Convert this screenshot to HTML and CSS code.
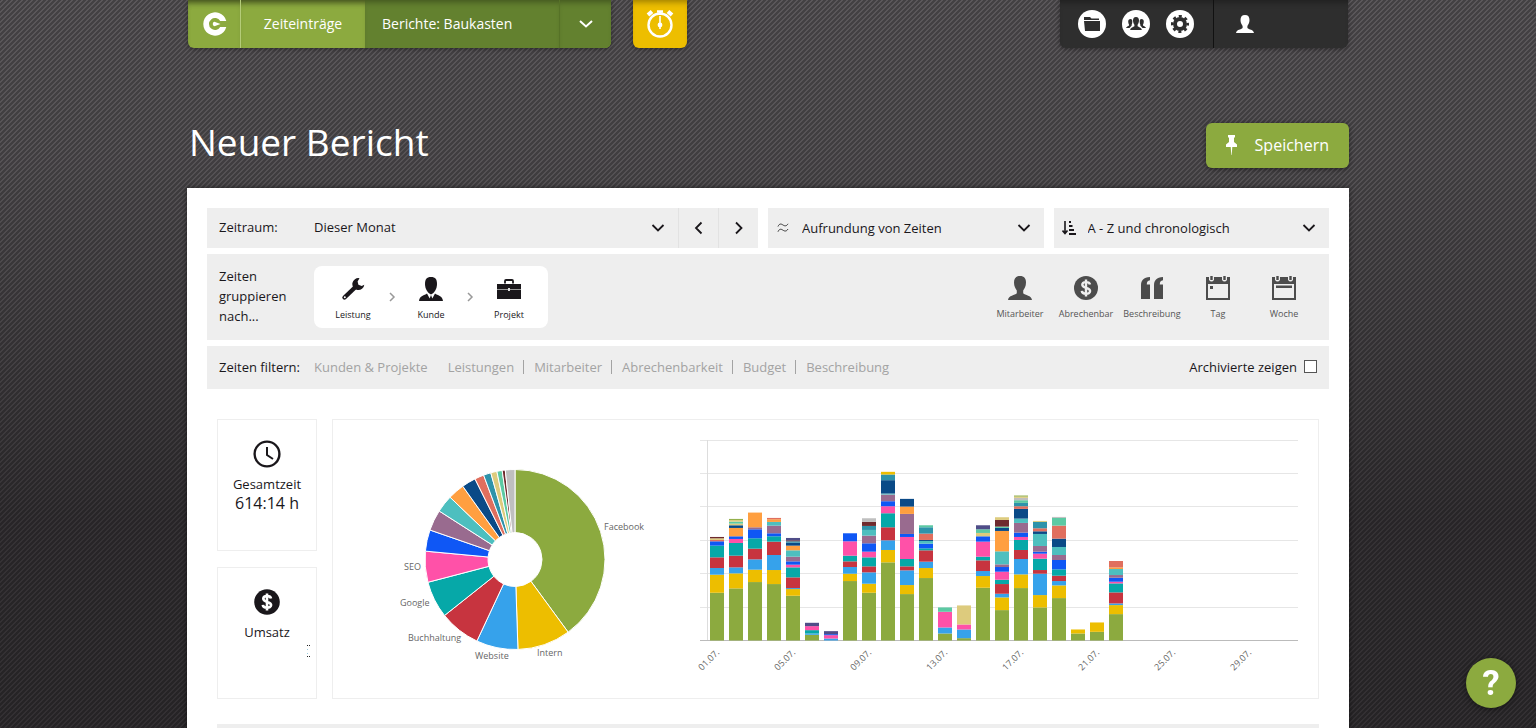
FILE: index.html
```html
<!DOCTYPE html>
<html lang="de">
<head>
    <meta charset="UTF-8">
    <meta name="viewport" content="width=device-width, initial-scale=1.0">
    <title>Neuer Bericht</title>
    <link rel="stylesheet" href="styles.css">
</head>
<body>
    <div class="wrapper">
        <header class="topbar">
            <nav class="main-nav">
                <a href="#" class="logo" aria-label="Start">
                    <svg width="24" height="24" viewBox="0 0 24 24" fill="#fff"><path d="M23.300 9A11.700 11.700 0 1 0 23.300 15H17.200A6 6 0 1 1 17.200 9Z"/><path d="M9.800 12c0-1.500 1-2.300 2.300-2.100L17.500 12l-5.400 2.100C10.800 14.300 9.800 13.500 9.800 12Z"/></svg>
                </a>
                <a href="#" class="nav-link">Zeiteinträge</a>
                <a href="#" class="nav-link active">Berichte: Baukasten</a>
                <button class="nav-more" aria-label="Mehr Berichte">
                    <svg width="14" height="10" viewBox="0 0 14 10"><path d="M1 2l6 5.500L13 2" fill="none" stroke="#fff" stroke-width="2"/></svg>
                </button>
            </nav>
            <button class="timer" aria-label="Stoppuhr">
                <svg width="28" height="28" viewBox="0 0 28 28" fill="none" stroke="#fff"><circle cx="14" cy="15" r="11.500" stroke-width="2.400"/><path d="M2 5l4-3.500M22 1.500l4 3.500" stroke-width="4"/><path d="M11 1.500h6M14 2v3" stroke-width="2.400"/><path d="M14 6v8" stroke-width="1.600"/><circle cx="14" cy="15" r="2.400" fill="#fff" stroke="none"/><path d="M14 15v4" stroke-width="1.600"/></svg>
            </button>
            <nav class="user-nav">
                <div class="admin-links">
                    <a href="#" class="round" aria-label="Projekte">
                        <svg width="16" height="14" viewBox="0 0 16 14" fill="#2e2e2e"><path d="M0 0h6l1.500 1.500H15V3H0zM0 4h16v10H1z"/></svg>
                    </a>
                    <a href="#" class="round" aria-label="Team">
                        <svg width="20" height="14" viewBox="0 0 20 14" fill="#2e2e2e"><path d="M10 0c2.200 0 3 1.600 3 3.600 0 2-.8 3.200-1.400 4.200v1.500c1 .9 4 1.200 4.200 3.700H4.200c.2-2.500 3.200-2.800 4.200-3.700V7.800C7.800 6.800 7 5.600 7 3.600 7 1.600 7.800 0 10 0Z"/><path d="M4.500 2C6 2 6.300 3 6.300 4.500S6 7 5.700 7.600v1L3.500 11H0c.2-1.600 2.300-1.800 3-2.600v-.9c-.5-.6-.8-1.600-.8-3S3 2 4.500 2ZM15.500 2c-1.500 0-1.800 1-1.800 2.500s.3 2.500.6 3.100v1l2.200 2.400H20c-.2-1.600-2.300-1.800-3-2.600v-.9c.5-.6.8-1.600.8-3S17 2 15.500 2Z"/></svg>
                    </a>
                    <a href="#" class="round" aria-label="Einstellungen">
                        <svg width="18" height="18" viewBox="0 0 18 18"><circle cx="9" cy="9" r="5" fill="none" stroke="#2e2e2e" stroke-width="4"/><circle cx="9" cy="9" r="7.800" fill="none" stroke="#2e2e2e" stroke-width="2.400" stroke-dasharray="3.100 3.026" stroke-dashoffset="1.500"/></svg>
                    </a>
                </div>
                <a href="#" class="profile" aria-label="Profil">
                    <svg width="18" height="18" viewBox="0 0 24 24" fill="#fff"><use href="#person"/></svg>
                </a>
            </nav>
        </header>

        <div class="headline">
            <h1>Neuer Bericht</h1>
            <button class="save">
                <svg width="11" height="20" viewBox="0 0 11 20" fill="#fff"><path d="M2 0h7v2L8 3v4l3 2.500V12H6.300L5.700 20h-.4L4.700 12H0V9.500L3 7V3L2 2z"/></svg>
                Speichern
            </button>
        </div>

        <main class="report">
            <div class="controls">
                <div class="field period">
                    <label for="period">Zeitraum:</label>
                    <div class="select-box">
                        <select id="period"><option>Dieser Monat</option></select>
                        <svg class="chevron" width="14" height="10" viewBox="0 0 14 10"><path d="M1.500 2L7 7.500 12.500 2"/></svg>
                    </div>
                    <button class="step" aria-label="Zurück"><svg width="10" height="14" viewBox="0 0 10 14"><path d="M7.500 1.500L2 7l5.500 5.500"/></svg></button>
                    <button class="step" aria-label="Weiter"><svg width="10" height="14" viewBox="0 0 10 14"><path d="M2 1.500L7.500 7 2 12.500"/></svg></button>
                </div>
                <div class="field option">
                    <svg class="lead" width="12" height="10" viewBox="0 0 12 10" fill="none" stroke="#333"><path d="M1 3.500C2.500 0 4.500 1 6 2s3.500 1.500 5-1.200M1 8.700c1.500-3.500 3.500-2.500 5-1.500s3.500 1.500 5-1.200"/></svg>
                    <div class="select-box">
                        <select id="rounding" aria-label="Aufrundung"><option>Aufrundung von Zeiten</option></select>
                        <svg class="chevron" width="14" height="10" viewBox="0 0 14 10"><path d="M1.500 2L7 7.500 12.500 2"/></svg>
                    </div>
                </div>
                <div class="field option">
                    <svg class="lead" width="14" height="14" viewBox="0 0 14 14" fill="none" stroke="#1a171b"><path d="M3 0v12M.5 9.500L3 12.500l2.500-3" stroke-width="1.600"/><path d="M7 1h2M7 5h3.500M7 9h5M7 13h7" stroke-width="2"/></svg>
                    <div class="select-box">
                        <select id="sorting" aria-label="Sortierung"><option>A - Z und chronologisch</option></select>
                        <svg class="chevron" width="14" height="10" viewBox="0 0 14 10"><path d="M1.500 2L7 7.500 12.500 2"/></svg>
                    </div>
                </div>
            </div>

            <div class="grouping">
                <div class="row-label">Zeiten gruppieren nach...</div>
                <div class="chosen">
                    <button class="group">
                        <svg width="24" height="24" viewBox="0 0 24 24"><path d="M3.500 20.500L15 9.500" fill="none" stroke="#1a171b" stroke-width="4.400" stroke-linecap="round"/><path d="M18.500 1.200a6 6 0 1 0 4.800 6.500l-2.600 1.300-3.300-1.300-.8-3.200z" fill="#1a171b"/><circle cx="3.800" cy="20.200" r="1" fill="#fff"/></svg>
                        Leistung
                    </button>
                    <svg class="sep" width="7" height="10" viewBox="0 0 7 10"><path d="M1 1l4 4-4 4"/></svg>
                    <button class="group">
                        <svg width="24" height="24" viewBox="0 0 24 24" fill="#1a171b"><path d="M12 0c4.500 0 6 2.600 6 7 0 5-2.600 9-6 10.500C8.600 16 6 12 6 7c0-4.400 1.500-7 6-7Z"/><path d="M8 16.500c-2.500 2-7.500 2.200-8 7.500h24c-.5-5.300-5.500-5.500-8-7.500l-2.700 5L12 18l-1.300 3.500z"/></svg>
                        Kunde
                    </button>
                    <svg class="sep" width="7" height="10" viewBox="0 0 7 10"><path d="M1 1l4 4-4 4"/></svg>
                    <button class="group">
                        <svg width="24" height="24" viewBox="0 0 24 24"><path d="M8 6.500V4q0-1 1-1h6q1 0 1 1v2.500" fill="none" stroke="#1a171b" stroke-width="1.800"/><path d="M0 7h24v15H0z" fill="#1a171b"/><path d="M0 12.500h24" stroke="#999"/><path d="M11 11h2v3h-2z" fill="#ddd"/></svg>
                        Projekt
                    </button>
                </div>
                <div class="available">
                    <button class="group">
                        <svg width="24" height="24" viewBox="0 0 24 24" fill="#4c4c4c"><path id="person" d="M12 0c4.200 0 6 2.600 6 6.500 0 4-1.600 6-2.800 8v2.700C17 19.500 23.500 19 24 24H0c.5-5 7-4.500 8.800-6.800v-2.700C7.600 12.500 6 10.500 6 6.500 6 2.600 7.800 0 12 0Z"/></svg>
                        Mitarbeiter
                    </button>
                    <button class="group">
                        <svg width="24" height="24" viewBox="0 0 24 24"><circle cx="12" cy="12" r="12" fill="#4c4c4c"/><path d="M16 8.500C15.500 5.400 8.300 5.200 8.300 8.800c0 3.800 7.800 2.400 7.800 6.300 0 3.800-8 3.500-8.300-.3M12 3.500v17" fill="none" stroke="#eee" stroke-width="2.400"/></svg>
                        Abrechenbar
                    </button>
                    <button class="group">
                        <svg width="24" height="24" viewBox="0 0 24 24" fill="#4c4c4c"><path d="M10 1v3.200C7.600 4.500 6.800 5.700 6.800 8.500H10V23H1V9.500C1 4.500 3.500 1.300 10 1ZM23 1v3.200c-2.400.3-3.200 1.500-3.200 4.300H23V23h-9V9.500C14 4.500 16.500 1.300 23 1Z"/></svg>
                        Beschreibung
                    </button>
                    <button class="group">
                        <svg width="24" height="24" viewBox="0 0 24 24"><path id="calendar" fill-rule="evenodd" d="M0 1h3v3q2.500 3 5 0V1h8v3q2.500 3 5 0V1h3v23H0zM2 8v14h20V8z" fill="#4c4c4c"/><path d="M5.500 0v4M18.500 0v4" stroke="#4c4c4c" stroke-width="2.400"/><path d="M4 10h3v3H4z" fill="#4c4c4c"/></svg>
                        Tag
                    </button>
                    <button class="group">
                        <svg width="24" height="24" viewBox="0 0 24 24"><use href="#calendar"/><path d="M5.500 0v4M18.500 0v4" stroke="#4c4c4c" stroke-width="2.400"/><path d="M4 9.500h16v2.500H4z" fill="#4c4c4c"/></svg>
                        Woche
                    </button>
                </div>
            </div>

            <div class="filters">
                <div class="row-label">Zeiten filtern:</div>
                <a href="#" class="first">Kunden &amp; Projekte</a>
                <a href="#">Leistungen</a>
                <a href="#">Mitarbeiter</a>
                <a href="#">Abrechenbarkeit</a>
                <a href="#">Budget</a>
                <a href="#">Beschreibung</a>
                <label class="archived" for="archived">Archivierte zeigen <input type="checkbox" id="archived"></label>
            </div>

            <div class="results">
                <div class="totals">
                    <div class="card">
                        <svg width="28" height="28" viewBox="0 0 28 28" fill="none" stroke="#1a171b"><circle cx="14" cy="14" r="12.400" stroke-width="2.400"/><path d="M14 7v8l6 4" stroke-width="2"/></svg>
                        <span>Gesamtzeit</span>
                        <strong>614:14 h</strong>
                    </div>
                    <div class="card">
                        <svg width="28" height="28" viewBox="0 0 28 28"><circle cx="14" cy="14" r="12.800" fill="#1a171b"/><path d="M18 10.500C17.500 7.400 10.300 7.200 10.300 10.800c0 3.800 7.800 2.400 7.800 6.300 0 3.800-8 3.500-8.300-.3M14 5.500v17" fill="none" stroke="#fff" stroke-width="2.600"/></svg>
                        <span>Umsatz</span>
                        <svg class="amount" width="3" height="12" viewBox="0 0 3 12"><path d="M0 0h1v1H0zM2 0h1v1H2zM0 11h1v1H0zM2 11h1v1H2z" fill="#222"/><path d="M0 4h1v1H0zM0 8h1v1H0z" fill="#9cd"/></svg>
                    </div>
                </div>
                <div class="charts">
                    <svg id="pie" width="330" height="238" viewBox="0 0 330 238"></svg>
                    <svg id="columns" width="600" height="238" viewBox="0 0 600 238"></svg>
                </div>
            </div>

            <div class="table-head"></div>
        </main>
    </div>
    <button class="help" aria-label="Hilfe">?</button>
    <script src="script.js"></script>
</body>
</html>
```
FILE: styles.css
```css
* {
    box-sizing: border-box;
}
body {
    margin: 0;
    min-height: 100vh;
    font-family: 'Open Sans', sans-serif;
    font-size: 13px;
    line-height: 20px;
    color: #1a171b;
    background-color: #302e30;
    background-image:
        linear-gradient(135deg, rgba(0,0,0,.25) 0 12%, transparent 12% 38%, rgba(0,0,0,.25) 38% 62%, transparent 62% 88%, rgba(0,0,0,.25) 88%),
        linear-gradient(#5a575a, #565356 150px, #353235 520px, #322f32);
    background-size: 5px 5px, 100% 100%;
}
a {
    color: inherit;
    text-decoration: none;
}
button, select {
    font: inherit;
    color: inherit;
    border: 0;
    background: none;
    cursor: pointer;
}
button {
    padding: 0;
}
svg {
    display: block;
    flex: none;
}
.wrapper {
    max-width: 1162px;
    margin: 0 auto;
}

/* Kopfleiste */
.topbar {
    display: flex;
    height: 48px;
    padding: 0 1px;
    font-size: 14px;
    color: #fff;
}
.main-nav, .timer, .user-nav {
    display: flex;
    overflow: hidden;
    border-radius: 0 0 6px 6px;
    box-shadow: 0 1px 4px rgba(0,0,0,.4), inset 0 6px 6px -4px rgba(0,0,0,.35);
}
.main-nav {
    background-color: #8caa3f;
}
.main-nav a, .nav-more {
    display: flex;
    align-items: center;
    justify-content: center;
    box-shadow: inset 0 6px 6px -4px rgba(0,0,0,.35);
}
.main-nav .logo {
    width: 53px;
    padding-left: 2px;
    border-right: 1px solid #b4cc78;
}
.nav-link {
    width: 124px;
}
.main-nav .active {
    width: 194px;
    padding-left: 17px;
    justify-content: flex-start;
    background: #63812f;
}
.nav-more {
    width: 52px;
    background: #63812f;
    border-left: 1px solid #567227;
}
.timer {
    width: 54px;
    margin-left: 22px;
    align-items: center;
    justify-content: center;
    background: #edbe00;
}
.user-nav {
    width: 288px;
    margin-left: auto;
    background: #2e2e2e;
}
.admin-links {
    display: flex;
    align-items: center;
    gap: 16px;
    width: 154px;
    padding-left: 18px;
    border-right: 1px solid #111;
}
.round {
    display: flex;
    align-items: center;
    justify-content: center;
    width: 28px;
    height: 28px;
    border-radius: 50%;
    background: #fff;
}
.profile {
    display: flex;
    align-items: center;
    padding-left: 22px;
}

.headline {
    display: flex;
    align-items: flex-start;
    justify-content: space-between;
    padding: 75px 0 20px 2px;
}
h1 {
    margin: 0;
    font-size: 37px;
    line-height: 38px;
    font-weight: 400;
    color: #fff;
}
.save {
    display: flex;
    align-items: center;
    justify-content: space-between;
    width: 143px;
    height: 45px;
    padding: 0 20px 2px;
    font-size: 16px;
    color: #fff;
    background: #8caa3f;
    border-radius: 6px;
    box-shadow: 0 1px 5px rgba(0,0,0,.5);
}

.report {
    padding: 20px 20px 0;
    background: #fff;
    box-shadow: 0 0 5px rgba(0,0,0,.5);
}
.controls {
    display: grid;
    grid-template-columns: 2fr 1fr 1fr;
    gap: 10px;
    margin-bottom: 6px;
}
.field {
    display: flex;
    align-items: center;
    height: 40px;
    background: #eee;
}
.period label {
    width: 107px;
    padding: 0 0 2px 12px;
}
.option .lead {
    margin-left: 8px;
    width: 14px;
}
.option .select-box {
    margin-left: 12px;
}
.select-box {
    display: grid;
    flex: 1;
    align-items: center;
}
.select-box select, .chevron {
    grid-area: 1 / 1;
}
.select-box select {
    width: 100%;
    height: 40px;
    padding: 0;
    appearance: none;
}
.select-box #period {
    padding-bottom: 2px;
}
.chevron {
    justify-self: end;
    margin-right: 13px;
    pointer-events: none;
}
.chevron path, .step path {
    fill: none;
    stroke: #1a171b;
    stroke-width: 1.8;
}
.step {
    display: flex;
    align-items: center;
    justify-content: center;
    width: 40px;
    height: 40px;
    border-left: 1px solid #e2e2e2;
}

.grouping {
    display: flex;
    padding: 12px;
    margin-bottom: 6px;
    background: #eee;
}
.row-label {
    width: 95px;
    flex: none;
}
.grouping .row-label {
    padding-right: 20px;
}
.chosen {
    display: flex;
    align-items: center;
    justify-content: center;
    gap: 3px;
    width: 234px;
    height: 62px;
    background: #fff;
    border-radius: 8px;
}
.group {
    display: flex;
    flex-direction: column;
    align-items: center;
    justify-content: center;
    gap: 8px;
    width: 66px;
    padding-top: 2px;
    font-size: 9px;
    line-height: 12px;
}
.chosen .group {
    width: 65px;
    height: 62px;
    padding-top: 4px;
}
.sep path {
    fill: none;
    stroke: #999;
    stroke-width: 1.5;
}
.available {
    display: flex;
    height: 62px;
    margin-left: auto;
    color: #555;
}

.filters {
    display: flex;
    align-items: center;
    height: 43px;
    padding: 0 12px 2px;
    background: #eee;
}
.filters a {
    height: 14px;
    line-height: 14px;
    padding: 0 9px 0 10px;
    color: #a3a3a3;
    border-left: 1px solid #a3a3a3;
}
.filters .first {
    padding-left: 0;
    border-left: 0;
}
.filters .first + a {
    border-left-color: transparent;
}
.archived {
    display: flex;
    align-items: center;
    gap: 7px;
    margin-left: auto;
}
.archived input {
    width: 13px;
    height: 13px;
    margin: 0;
    appearance: none;
    background: #fff;
    border: 1px solid #555;
}
.archived input:checked {
    background: #8caa3f;
}

.results {
    display: flex;
    gap: 15px;
    padding: 30px 10px 25px;
}
.totals {
    display: flex;
    flex-direction: column;
    gap: 16px;
    width: 100px;
}
.card {
    display: flex;
    flex-direction: column;
    align-items: center;
    height: 132px;
    padding: 20px 6px;
    border: 1px solid #eee;
}
.card span {
    margin-top: 6px;
}
.card strong {
    font-size: 16px;
    line-height: 18px;
    font-weight: 400;
}
.card .amount {
    align-self: flex-end;
    margin-top: 3px;
}
.charts {
    display: flex;
    flex: 1;
    justify-content: space-between;
    padding: 20px;
    border: 1px solid #eee;
}
.charts svg {
    overflow: visible;
}
.charts text {
    font-size: 9px;
    fill: #666;
}
.table-head {
    height: 40px;
    margin: 0 10px;
    background: #eee;
}
.help {
    position: fixed;
    right: 20px;
    bottom: 20px;
    width: 50px;
    height: 50px;
    padding-top: 2px;
    font-family: Roboto, sans-serif;
    font-size: 35px;
    font-weight: 700;
    color: #fff;
    background: #8caa3f;
    border-radius: 50%;
    box-shadow: 0 1px 6px rgba(0,0,0,.5);
}
```
FILE: script.js
```js
var NS = 'http://www.w3.org/2000/svg';
var colors = ['#8caa3f', '#edbe00', '#36a2eb', '#c7343f', '#06a8a8', '#ff51a8', '#0f57f5', '#996b8f', '#4dbfbf',
    '#ff9f40', '#0a4a87', '#e06f5e', '#2e93aa', '#ddcb7d', '#5cc9a3', '#6e2a2e', '#bfbfbf', '#4f4d88', '#edbe00', '#ddcb7d', '#8caa3f'];

// Stunden pro Leistung
var shares = [245.3, 58.5, 45.9, 45.2, 40.6, 34.1, 23.5, 23, 19.1, 18.3, 15.5, 10.2, 8.2, 6.8, 5.8, 3.4, 10.6];

// Stunden pro Tag, gestapelt nach Leistung
var days = [
    [14.3, 5.4, 2, 3.2, 3.5, 0, 1.3, 0, 0, 0, 0, 0.4, 0, 0.5, 0, 0.4],
    [15.6, 4.5, 1.8, 3.5, 3.8, 1.2, 0.8, 0, 0, 2.5, 0.8, 0, 0, 0.5, 0.6, 0, 0, 0, 0, 0.5, 0.3],
    [17.5, 3.7, 3.1, 3.2, 3.1, 0, 2.7, 0.6, 0, 4.4],
    [16.9, 4.2, 4.5, 4, 1.6, 0, 0.9, 2.3, 1.1, 0.8, 0, 0.4],
    [13.4, 2, 0.3, 3.2, 3, 0.8, 1, 1.4, 1.9, 1.4, 0.9, 0, 0.4, 0, 0, 0.3, 0, 0.7],
    [1.7, 0, 0.4, 0, 1, 1.2, 0, 0, 0, 0, 0, 0, 0, 0, 0, 0, 0, 1],
    [0, 0, 0.6, 0, 0, 1, 0.3, 0, 0, 0, 0, 0, 0, 0, 0, 0, 0, 0.9],
    [17.8, 2.2, 2, 1.7, 1.7, 4.3, 2.4],
    [14.3, 2.7, 3.4, 1.8, 2.7, 1.7, 2.5, 2.3, 1.7, 0, 0, 0, 1.2, 0, 0, 1.2, 1.1],
    [23.4, 3.7, 2.9, 3.9, 4.2, 2.1, 1.5, 2, 0.3, 0, 4, 0, 1.7, 0, 0, 0, 0, 0, 0.8],
    [13.9, 2.7, 4.4, 1.2, 2.2, 6.6, 0.9, 6, 0, 2.2, 2.3],
    [18.7, 3, 1.9, 3.4, 0.6, 0, 1.4, 0, 0.8, 0, 0.3, 1.9, 1.9, 0, 0.6],
    [2.1, 0, 1.8, 0, 0, 4.7, 0, 0, 0, 0, 0, 0, 0, 0, 1.3],
    [0.7, 0, 2.6, 0, 0, 1.5, 0, 0, 0, 0, 0, 0, 0, 5.7],
    [15.8, 3.5, 1.5, 3.2, 1.1, 4.5, 1.6, 0, 0, 0, 0, 0, 0, 1, 1.1, 0, 0, 1.2],
    [9.1, 3.8, 1.1, 2.9, 1.3, 2.4, 1.4, 0.8, 3.9, 6.1, 0.9, 0, 0, 0, 0.4, 2, 0, 0, 0, 0.8],
    [15.7, 4.1, 4.6, 2.7, 3, 0.9, 1.3, 2.9, 1.3, 0, 2.9, 0.8, 1, 0, 0.8, 0, 0.7, 0, 0, 0.4, 0.3],
    [9.9, 3.7, 6.4, 1.1, 3.4, 1.5, 0.6, 1.7, 3.6, 0, 0.8, 0.9, 1.9, 0.3],
    [12.7, 3.8, 1.3, 1.6, 1.9, 0, 2.8, 1.5, 2.4, 0, 2.5, 3.9, 0, 0, 2.3, 0, 0.3],
    [2.1, 1.2],
    [2.6, 2.8],
    [7.9, 2.7, 0.5, 3.3, 2.7, 0.5, 1.2, 0.8, 1.8, 0.5, 0, 1.9]
];

function add(parent, name, attrs, text) {
    var el = document.createElementNS(NS, name);
    for (var key in attrs) {
        el.setAttribute(key, attrs[key]);
    }
    if (text) {
        el.textContent = text;
    }
    parent.appendChild(el);
    return el;
}

function drawPie() {
    var svg = document.getElementById('pie');
    var cx = 162, cy = 119.5, r = 90, inner = 27;
    var total = shares.reduce(function (a, b) { return a + b; }, 0);
    var angle = 0;
    shares.forEach(function (value, i) {
        var end = angle + value / total * Math.PI * 2;
        var large = end - angle > Math.PI ? 1 : 0;
        var s1 = Math.sin(angle), c1 = Math.cos(angle);
        var s2 = Math.sin(end), c2 = Math.cos(end);
        var d = 'M' + (cx + r * s1) + ' ' + (cy - r * c1) +
            'A' + r + ' ' + r + ' 0 ' + large + ' 1 ' + (cx + r * s2) + ' ' + (cy - r * c2) +
            'L' + (cx + inner * s2) + ' ' + (cy - inner * c2) +
            'A' + inner + ' ' + inner + ' 0 ' + large + ' 0 ' + (cx + inner * s1) + ' ' + (cy - inner * c1) + 'Z';
        add(svg, 'path', { d: d, fill: colors[i], stroke: '#fff', 'stroke-width': 1 });
        angle = end;
    });
    var labels = [['Facebook', 251, 90], ['Intern', 184, 216], ['Website', 122, 219], ['Buchhaltung', 55, 201],
        ['Google', 47, 166], ['SEO', 51, 130]];
    labels.forEach(function (l) {
        add(svg, 'text', { x: l[1], y: l[2] }, l[0]);
    });
}

function drawColumns() {
    var svg = document.getElementById('columns');
    var base = 201, hour = 3.34, step = 19;
    for (var g = 0; g <= 6; g++) {
        var y = Math.round(base - g * 10 * hour) - 0.5;
        add(svg, 'path', { d: 'M2 ' + y + 'H600', stroke: g ? '#e6e6e6' : '#bbb' });
    }
    add(svg, 'path', { d: 'M9.5 0V200', stroke: '#ddd' });
    days.forEach(function (values, day) {
        var y = base - 0.5;
        values.forEach(function (value, i) {
            var h = value * hour;
            y -= h;
            add(svg, 'rect', { x: 12 + day * step, y: y, width: 14, height: h, fill: colors[i] });
        });
    });
    for (var d = 1; d <= 29; d += 4) {
        var x = 22 + (d - 1) * step;
        add(svg, 'text', { x: x, y: 213, 'text-anchor': 'end', transform: 'rotate(-45 ' + x + ' 213)' },
            (d < 10 ? '0' + d : d) + '.07.');
    }
}

drawPie();
drawColumns();
```
